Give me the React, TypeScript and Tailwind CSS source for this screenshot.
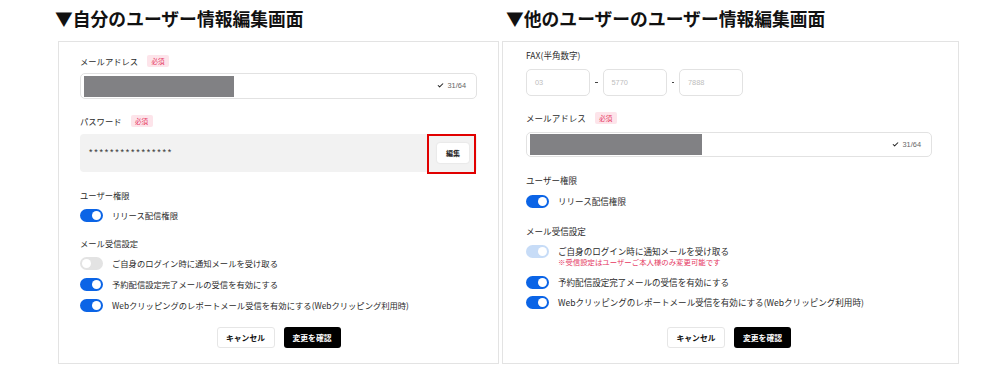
import React from 'react';
import { Check } from 'lucide-react';

const FONT = "font-['Noto_Sans_CJK_JP','Noto_Sans',sans-serif]";

const Badge = () => (
  <span className="ml-[9px] inline-flex h-[12px] w-[22px] items-center justify-center rounded-[2px] bg-[#fde4ea] text-[6.5px] leading-none text-[#e5375f]">
    必須
  </span>
);

const Label = ({ text, required, sz = 'text-[8.3px]' }: { text: string; required?: boolean; sz?: string }) => (
  <div className={`flex h-[12px] items-center leading-none text-[#2b2b2b] ${sz}`}>
    <span>{text}</span>
    {required && <Badge />}
  </div>
);

const Toggle = ({ state }: { state: 'on' | 'off' | 'disabled' }) => {
  const track =
    state === 'on' ? 'bg-[#0b64e6]' : state === 'disabled' ? 'bg-[#c7dcf7]' : 'bg-[#e3e3e3]';
  const knob = state === 'off' ? 'justify-start' : 'justify-end';
  return (
    <div className={`flex h-[13px] w-[23px] shrink-0 items-center rounded-full px-[2px] ${track} ${knob}`}>
      <div className="h-[9px] w-[9px] rounded-full bg-white" />
    </div>
  );
};

const ToggleRow = ({
  state,
  text,
  note,
  sz = 'text-[8.3px]',
  className = '',
}: {
  state: 'on' | 'off' | 'disabled';
  text: string;
  note?: string;
  sz?: string;
  className?: string;
}) => (
  <div className={`flex items-start gap-[9px] ${className}`}>
    <Toggle state={state} />
    <div className="flex flex-col">
      <span className={`flex h-[13px] items-center leading-none text-[#2b2b2b] ${sz}`}>{text}</span>
      {note && <span className="mt-[-1px] text-[7.4px] leading-[9px] text-[#e5375f]">{note}</span>}
    </div>
  </div>
);

const EmailInput = ({ className = '', h, fill }: { className?: string; h: string; fill: string }) => (
  <div className={`flex items-center rounded-[5px] border border-[#e2e2e2] bg-white px-[3px] ${h} ${className}`}>
    <div className={`h-[21px] bg-[#818184] ${fill}`} />
    <div className="ml-auto mr-[7px] flex items-center gap-[4px] text-[7.4px] text-[#666]">
      <Check size={7} strokeWidth={3.5} className="text-[#222]" />
      <span className="font-['Liberation_Sans',sans-serif]">31/64</span>
    </div>
  </div>
);

const Buttons = ({ className = '' }: { className?: string }) => (
  <div className={`flex justify-center gap-[9px] ${className}`}>
    <button className="flex h-[21px] w-[58px] items-center justify-center rounded-[3px] border border-[#e6e6e6] bg-white text-[7.8px] font-bold text-[#111]">
      キャンセル
    </button>
    <button className="flex h-[21px] w-[57px] items-center justify-center rounded-[3px] bg-black text-[7.8px] font-bold text-white">
      変更を確認
    </button>
  </div>
);

const FaxBox = ({ value }: { value: string }) => (
  <div className="flex h-[27px] w-[64px] items-center rounded-[5px] border border-[#e2e2e2] pl-[8px] font-['Liberation_Sans',sans-serif] text-[7.4px] text-[#bdbdbd]">
    {value}
  </div>
);

const Dash = () => <div className="mx-[5px] h-[1.5px] w-[2.5px] bg-[#444]" />;

const R = 'text-[8.55px]';

export default function App() {
  return (
    <div className={`flex h-[371px] w-[1000px] overflow-hidden bg-white ${FONT}`}>
      {/* self edit */}
      <div className="ml-[55px] flex w-[441px] flex-col">
        <h2 className="mt-[8px] h-[21px] text-[17.8px] font-bold leading-[21px] text-[#111]">
          ▼自分のユーザー情報編集画面
        </h2>
        <div className="ml-[3px] mt-[12px] flex h-[323px] w-[441px] flex-col border border-[#e3e3e3] pl-[21px] pr-[21px] pt-[13px]">
          <Label text="メールアドレス" required />
          <EmailInput className="mt-[6px]" h="h-[26px]" fill="w-[150px]" />

          <div className="mt-[16px]">
            <Label text="パスワード" required />
          </div>
          <div className="mt-[7px] flex h-[38px] items-center rounded-[4px] bg-[#f2f2f2] pl-[9px] pr-[8px]">
            <span className="font-['Liberation_Sans',sans-serif] text-[9px] tracking-[1.75px] text-[#333]">
              ****************
            </span>
            <div className="relative ml-auto">
              <button className="flex h-[20px] w-[32px] items-center justify-center rounded-[3px] bg-white text-[7px] font-bold text-[#222] shadow-[0_0_2px_rgba(0,0,0,0.12)]">
                編集
              </button>
              <div className="pointer-events-none absolute left-[-10px] top-[-9px] h-[40px] w-[49px] border-2 border-[#e10000]" />
            </div>
          </div>

          <div className="mt-[17px]">
            <Label text="ユーザー権限" />
          </div>
          <ToggleRow className="mt-[8px]" state="on" text="リリース配信権限" />

          <div className="mt-[15px]">
            <Label text="メール受信設定" />
          </div>
          <ToggleRow className="mt-[8px]" state="off" text="ご自身のログイン時に通知メールを受け取る" />
          <ToggleRow className="mt-[8px]" state="on" text="予約配信設定完了メールの受信を有効にする" />
          <ToggleRow
            className="mt-[8px]"
            state="on"
            text="Webクリッピングのレポートメール受信を有効にする(Webクリッピング利用時)"
          />

          <Buttons className="mt-[15px]" />
        </div>
      </div>

      {/* other user edit */}
      <div className="ml-[6px] flex w-[457px] flex-col">
        <h2 className="ml-[4px] mt-[8px] h-[21px] text-[17.8px] font-bold leading-[21px] text-[#111]">
          ▼他のユーザーのユーザー情報編集画面
        </h2>
        <div className="mt-[12px] flex h-[323px] w-[457px] flex-col border border-[#e3e3e3] pl-[23px] pr-[26px] pt-[7px]">
          <Label text="FAX(半角数字)" sz={R} />
          <div className="mt-[8px] flex items-center">
            <FaxBox value="03" />
            <Dash />
            <FaxBox value="5770" />
            <Dash />
            <FaxBox value="7888" />
          </div>

          <div className="mt-[16px]">
            <Label text="メールアドレス" required sz={R} />
          </div>
          <EmailInput className="mt-[8px]" h="h-[25px]" fill="w-[172px]" />

          <div className="mt-[17px]">
            <Label text="ユーザー権限" sz={R} />
          </div>
          <ToggleRow className="mt-[9px]" state="on" text="リリース配信権限" sz={R} />

          <div className="mt-[17px]">
            <Label text="メール受信設定" sz={R} />
          </div>
          <ToggleRow
            className="mt-[8px]"
            state="disabled"
            text="ご自身のログイン時に通知メールを受け取る"
            note="※受信設定はユーザーご本人様のみ変更可能です"
            sz={R}
          />
          <ToggleRow className="mt-[10px]" state="on" text="予約配信設定完了メールの受信を有効にする" sz={R} />
          <ToggleRow
            className="mt-[7px]"
            state="on"
            text="Webクリッピングのレポートメール受信を有効にする(Webクリッピング利用時)"
            sz={R}
          />

          <Buttons className="mt-[18px]" />
        </div>
      </div>
    </div>
  );
}
